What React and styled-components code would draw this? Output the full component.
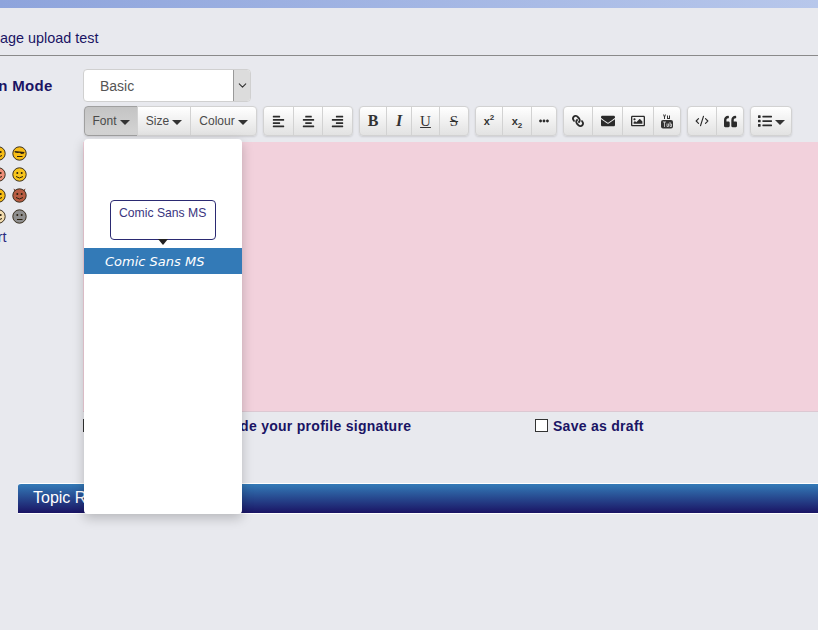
import React from "react";
import styled, { createGlobalStyle } from "styled-components";
import { LuChevronDown, LuCodeXml } from "react-icons/lu";
import {
  FaAlignCenter,
  FaAlignLeft,
  FaAlignRight,
  FaEllipsisH,
  FaEnvelope,
  FaLink,
  FaList,
  FaQuoteLeft,
  FaRegImage,
} from "react-icons/fa";

const Global = createGlobalStyle`
  html, body {
    margin: 0;
    background: #e8e9ee;
    overflow: hidden;
  }
  body {
    font-family: "Liberation Sans", Arial, sans-serif;
    color: #1a1464;
  }
`;

const Viewport = styled.div`
  width: 818px;
  height: 630px;
  overflow: hidden;
`;

const TopBar = styled.div`
  height: 8px;
  background: linear-gradient(to right, #8ea4dc, #b7c7eb);
`;

/* the page is scrolled sideways in the shot, so the left edge is cut off */
const Scrolled = styled.div`
  width: 1000px;
  margin-left: -100px;
`;

const Title = styled.div`
  height: 48px;
  box-sizing: border-box;
  padding: 22px 0 0 84px;
  font-size: 14.4px;
  line-height: 16px;
  border-bottom: 1px solid #8a8a8a;
  white-space: nowrap;
`;

const Form = styled.div`
  display: grid;
  grid-template-columns: 183px 1fr;
  margin-top: 13px;
`;

const Label = styled.div`
  font-size: 15px;
  font-weight: bold;
  letter-spacing: 0.3px;
  line-height: 34px;
  padding-left: 56px;
  white-space: nowrap;
`;

const SelectBox = styled.div`
  width: 168px;
  height: 33px;
  box-sizing: border-box;
  display: flex;
  background: #fff;
  border: 1px solid #d0d0d0;
  border-radius: 4px;
  overflow: hidden;
`;

const SelectValue = styled.div`
  flex: 1;
  padding-left: 16px;
  font-size: 14px;
  line-height: 32px;
  color: #555;
`;

const SelectArrow = styled.div`
  width: 16px;
  display: flex;
  align-items: center;
  justify-content: center;
  background: #dcdcdc;
  border-left: 1px solid #999;
  color: #333;
  font-size: 13px;
`;

const Toolbar = styled.div`
  position: relative;
  display: flex;
  gap: 6px;
  margin-top: 4px;
  margin-left: 1px;
  height: 30px;
`;

const Group = styled.div`
  display: flex;
  border-radius: 4px;
  box-shadow: 0 1px 2px rgba(0, 0, 0, 0.12);
`;

const Tool = styled.div`
  width: ${(p) => p.$w}px;
  box-sizing: border-box;
  display: flex;
  align-items: center;
  justify-content: center;
  gap: 3px;
  font-size: 12px;
  color: #4a4a4a;
  border: 1px solid #d2d2d2;
  margin-left: -1px;
  background: ${(p) =>
    p.$active
      ? "linear-gradient(to bottom, #c4c4c4, #d4d4d4)"
      : "linear-gradient(to bottom, #ffffff, #e2e2e2)"};
  border-color: ${(p) => (p.$active ? "#a0a0a0" : "#d2d2d2")};
  &:first-child {
    margin-left: 0;
    border-radius: 4px 0 0 4px;
  }
  &:last-child {
    border-radius: 0 4px 4px 0;
  }
  &:only-child {
    border-radius: 4px;
  }
  svg {
    color: #2b2b2b;
    font-size: ${(p) => p.$icon || 13}px;
  }
`;

const Caret = styled.span`
  width: 0;
  height: 0;
  margin-top: 2px;
  border-left: 5px solid transparent;
  border-right: 5px solid transparent;
  border-top: 5px solid #333;
`;

const SerifGlyph = styled.span`
  font-family: "Liberation Serif", serif;
  font-size: ${(p) => p.$size || 15}px;
  font-weight: ${(p) => (p.$bold ? "bold" : "normal")};
  font-style: ${(p) => (p.$italic ? "italic" : "normal")};
  text-decoration: ${(p) => p.$line || "none"};
  color: #333;
`;

const SmallScript = styled.span`
  font-family: "Liberation Sans", sans-serif;
  font-size: 11px;
  font-weight: bold;
  color: #333;
  sup, sub {
    font-size: 8px;
    line-height: 0;
  }
`;

const Dropdown = styled.div`
  position: absolute;
  top: 33px;
  left: 0;
  z-index: 5;
  width: 158px;
  height: 375px;
  background: #fff;
  border-radius: 4px;
  box-shadow: 0 4px 12px rgba(0, 0, 0, 0.22);
  padding-top: 109px;
  box-sizing: border-box;
`;

const FontOption = styled.div`
  height: 26px;
  line-height: 28px;
  padding-left: 21px;
  background: #337ab7;
  color: #fff;
  font-family: "Comic Sans MS", "DejaVu Sans", cursive;
  font-style: italic;
  font-size: 13px;
  white-space: nowrap;
`;

const Tip = styled.div`
  position: absolute;
  top: 61px;
  left: 26px;
  width: 106px;
  height: 40px;
  box-sizing: border-box;
  padding: 5px 0 0 8px;
  font-size: 12.2px;
  line-height: 15px;
  color: #3a3580;
  background: #fff;
  border: 1px solid #2b2a72;
  border-radius: 4px;
  &::after {
    content: "";
    position: absolute;
    left: 47px;
    top: 38px;
    border-left: 5px solid transparent;
    border-right: 5px solid transparent;
    border-top: 6px solid #222;
  }
`;

const Side = styled.div`
  padding-top: 10px;
  padding-left: 91px;
`;

const Smileys = styled.div`
  display: grid;
  grid-template-columns: repeat(2, 15px);
  grid-auto-rows: 21px;
  column-gap: 6px;
`;

const ChartLink = styled.div`
  font-size: 14.4px;
  line-height: 14px;
  margin-left: -74px;
  color: #2a2a80;
  white-space: nowrap;
`;

const Editor = styled.div`
  height: 269px;
  margin-top: 6px;
  background: #f2d1dc;
  border-bottom: 1px solid #dcc8d2;
`;

const Options = styled.div`
  display: flex;
  align-items: center;
  height: 27px;
  font-size: 14px;
  font-weight: bold;
  letter-spacing: 0.28px;
  white-space: nowrap;
`;

const Option = styled.label`
  display: flex;
  align-items: center;
  gap: 5px;
  width: ${(p) => p.$w}px;
`;

const Check = styled.span`
  width: 13px;
  height: 13px;
  box-sizing: border-box;
  background: #fff;
  border: 1px solid #333;
`;

const TopicBar = styled.div`
  margin: 44px 0 0 118px;
  height: 29px;
  padding-left: 15px;
  border-top: 1px solid #fff;
  border-bottom: 1px solid #fff;
  border-radius: 3px 0 0 0;
  background: linear-gradient(to bottom, #337ab7, #1a1464);
  color: #fff;
  font-size: 16px;
  line-height: 28px;
`;

const faces = [
  ["#f7bd16", "smile"],
  ["#f7bd16", "shades"],
  ["#ee8f7a", "tongue"],
  ["#f7c51e", "smile"],
  ["#f7bd16", "smile"],
  ["#b85c42", "devil"],
  ["#f2dcae", "smile"],
  ["#8f8f8f", "flat"],
];

function Face({ fill, kind }) {
  return (
    <svg width="15" height="15" viewBox="0 0 15 15">
      {kind === "devil" && <path d="M1.5 0.5 L3 5 L5 3 Z M13.5 0.5 L12 5 L10 3 Z" fill="#6b2a1a" />}
      <circle cx="7.5" cy="7.5" r="6.7" fill={fill} stroke="#3a3020" strokeWidth="1" />
      {kind === "shades" ? (
        <path d="M2.5 5 L12.5 6 L12 7.5 L9.5 8 L7.5 6.8 L5.5 7 L3 6.5 Z" fill="#2a2010" />
      ) : (
        <>
          <circle cx="5.3" cy="6" r="1" fill="#2a2010" />
          <circle cx="9.7" cy="6" r="1" fill="#2a2010" />
        </>
      )}
      {kind === "flat" || kind === "shades" ? (
        <path d="M5 10.5 H10.5" stroke="#2a2010" fill="none" />
      ) : (
        <path d="M4 9.5 Q7.5 12.5 11 9.5" stroke="#2a2010" fill="none" />
      )}
    </svg>
  );
}

function YoutubeIcon() {
  return (
    <svg width="12" height="15" viewBox="0 0 12 15" fill="#333">
      <path d="M2 0.5 H3 L3.5 2 L4 0.5 H5 L4 3 V5 H3 V3 Z M6 1.5 H7 V4 H8 V1.5 H9 V5 H6 Z" />
      <rect x="0" y="6" width="12" height="8.5" rx="2" />
      <path d="M2 8 H5 M3.5 8 V13 M6 9.5 V12.5 H7.5 V9.5 M9 8 V12.5 H10.5 V10 H9" stroke="#ddd" strokeWidth="0.8" fill="none" />
    </svg>
  );
}

export default function App() {
  return (
    <Viewport>
      <Global />
      <TopBar />
      <Scrolled>
        <Title>Image upload test</Title>
        <Form>
          <Label>Design Mode</Label>
          <div>
            <SelectBox>
              <SelectValue>Basic</SelectValue>
              <SelectArrow>
                <LuChevronDown />
              </SelectArrow>
            </SelectBox>
            <Toolbar>
              <Group>
                <Tool $w={54} $active>Font <Caret /></Tool>
                <Tool $w={54}>Size <Caret /></Tool>
                <Tool $w={67}>Colour <Caret /></Tool>
              </Group>
              <Group>
                <Tool $w={31}><FaAlignLeft /></Tool>
                <Tool $w={30}><FaAlignCenter /></Tool>
                <Tool $w={31}><FaAlignRight /></Tool>
              </Group>
              <Group>
                <Tool $w={28}><SerifGlyph $bold $size={16}>B</SerifGlyph></Tool>
                <Tool $w={26}><SerifGlyph $bold $italic $size={16}>I</SerifGlyph></Tool>
                <Tool $w={29}><SerifGlyph $line="underline">U</SerifGlyph></Tool>
                <Tool $w={30}><SerifGlyph $line="line-through">S</SerifGlyph></Tool>
              </Group>
              <Group>
                <Tool $w={28}><SmallScript>x<sup>2</sup></SmallScript></Tool>
                <Tool $w={30}><SmallScript>x<sub>2</sub></SmallScript></Tool>
                <Tool $w={26} $icon={10}><FaEllipsisH /></Tool>
              </Group>
              <Group>
                <Tool $w={30} $icon={12}><FaLink style={{ transform: "scaleX(-1)" }} /></Tool>
                <Tool $w={31} $icon={14}><FaEnvelope /></Tool>
                <Tool $w={32} $icon={14}><FaRegImage /></Tool>
                <Tool $w={28}><YoutubeIcon /></Tool>
              </Group>
              <Group>
                <Tool $w={30} $icon={14}><LuCodeXml /></Tool>
                <Tool $w={28}><FaQuoteLeft /></Tool>
              </Group>
              <Group>
                <Tool $w={42} $icon={14}><FaList /> <Caret /></Tool>
              </Group>
              <Dropdown>
                <Tip>Comic Sans MS</Tip>
                <FontOption>Comic Sans MS</FontOption>
              </Dropdown>
            </Toolbar>
          </div>
          <Side>
            <Smileys>
              {faces.map(([fill, kind], i) => (
                <Face key={i} fill={fill} kind={kind} />
              ))}
            </Smileys>
            <ChartLink>Smileys Chart</ChartLink>
          </Side>
          <div>
            <Editor />
            <Options>
              <Option $w={105}><Check /></Option>
              <Option $w={347}><Check />Include your profile signature</Option>
              <Option $w={200}><Check />Save as draft</Option>
            </Options>
          </div>
        </Form>
        <TopicBar>Topic Review</TopicBar>
      </Scrolled>
    </Viewport>
  );
}
